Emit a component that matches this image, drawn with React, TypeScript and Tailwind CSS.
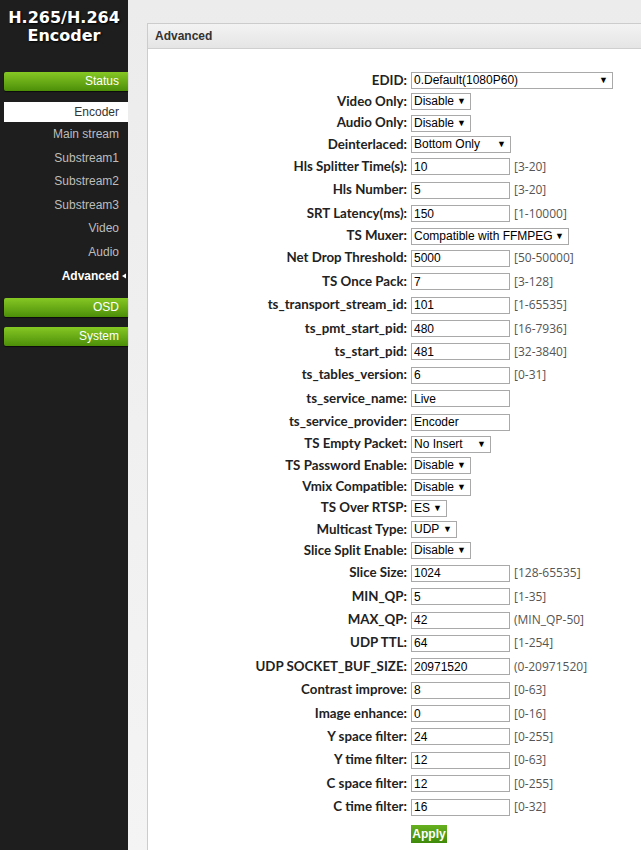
import React from 'react';

type Row =
  | { kind: 'select'; label: string; value: string; width: number }
  | { kind: 'input'; label: string; value: string; range?: string };

const rows: Row[] = [
  { kind: 'select', label: 'EDID', value: '0.Default(1080P60)', width: 202 },
  { kind: 'select', label: 'Video Only', value: 'Disable', width: 60 },
  { kind: 'select', label: 'Audio Only', value: 'Disable', width: 60 },
  { kind: 'select', label: 'Deinterlaced', value: 'Bottom Only', width: 100 },
  { kind: 'input', label: 'Hls Splitter Time(s)', value: '10', range: '[3-20]' },
  { kind: 'input', label: 'Hls Number', value: '5', range: '[3-20]' },
  { kind: 'input', label: 'SRT Latency(ms)', value: '150', range: '[1-10000]' },
  { kind: 'select', label: 'TS Muxer', value: 'Compatible with FFMPEG', width: 158 },
  { kind: 'input', label: 'Net Drop Threshold', value: '5000', range: '[50-50000]' },
  { kind: 'input', label: 'TS Once Pack', value: '7', range: '[3-128]' },
  { kind: 'input', label: 'ts_transport_stream_id', value: '101', range: '[1-65535]' },
  { kind: 'input', label: 'ts_pmt_start_pid', value: '480', range: '[16-7936]' },
  { kind: 'input', label: 'ts_start_pid', value: '481', range: '[32-3840]' },
  { kind: 'input', label: 'ts_tables_version', value: '6', range: '[0-31]' },
  { kind: 'input', label: 'ts_service_name', value: 'Live' },
  { kind: 'input', label: 'ts_service_provider', value: 'Encoder' },
  { kind: 'select', label: 'TS Empty Packet', value: 'No Insert', width: 80 },
  { kind: 'select', label: 'TS Password Enable', value: 'Disable', width: 60 },
  { kind: 'select', label: 'Vmix Compatible', value: 'Disable', width: 60 },
  { kind: 'select', label: 'TS Over RTSP', value: 'ES', width: 36 },
  { kind: 'select', label: 'Multicast Type', value: 'UDP', width: 46 },
  { kind: 'select', label: 'Slice Split Enable', value: 'Disable', width: 60 },
  { kind: 'input', label: 'Slice Size', value: '1024', range: '[128-65535]' },
  { kind: 'input', label: 'MIN_QP', value: '5', range: '[1-35]' },
  { kind: 'input', label: 'MAX_QP', value: '42', range: '(MIN_QP-50]' },
  { kind: 'input', label: 'UDP TTL', value: '64', range: '[1-254]' },
  { kind: 'input', label: 'UDP SOCKET_BUF_SIZE', value: '20971520', range: '(0-20971520]' },
  { kind: 'input', label: 'Contrast improve', value: '8', range: '[0-63]' },
  { kind: 'input', label: 'Image enhance', value: '0', range: '[0-16]' },
  { kind: 'input', label: 'Y space filter', value: '24', range: '[0-255]' },
  { kind: 'input', label: 'Y time filter', value: '12', range: '[0-63]' },
  { kind: 'input', label: 'C space filter', value: '12', range: '[0-255]' },
  { kind: 'input', label: 'C time filter', value: '16', range: '[0-32]' },
];

const subItems = ['Main stream', 'Substream1', 'Substream2', 'Substream3', 'Video', 'Audio'];

const GreenTab: React.FC<{ label: string }> = ({ label }) => (
  <div className="ml-[4px] h-[19px] rounded-l-[2px] bg-gradient-to-b from-[#86c823] to-[#4c8f08] text-right pr-[9px] text-[12px] leading-[19px] text-white shadow-[0_1px_1px_rgba(0,0,0,0.6)]">
    {label}
  </div>
);

const FakeSelect: React.FC<{ value: string; width: number }> = ({ value, width }) => (
  <div
    className="relative h-[17px] border border-[#a9a9a9] bg-white pl-[2px] text-[12px] leading-[15px] text-black"
    style={{ width }}
  >
    <span>{value}</span>
    <span className="absolute right-[4px] top-0 text-[9px] leading-[15px]">▼</span>
  </div>
);

export default function App() {
  return (
    <div className="flex min-h-[850px] w-[641px] overflow-hidden bg-gradient-to-b from-[#ececec] to-[#f4f4f4] font-['Liberation_Sans',Arial,sans-serif]">
      <aside className="w-[128px] shrink-0 bg-[#1e1e1e]">
        <div className="pt-[9px] text-center font-['DejaVu_Sans',Verdana,sans-serif] text-[16px] font-bold leading-[18px] text-white [text-shadow:1px_1px_2px_#000]">
          <div>H.265/H.264</div>
          <div>Encoder</div>
        </div>
        <div className="mt-[27px]">
          <GreenTab label="Status" />
        </div>
        <div className="ml-[4px] mt-[11px] h-[20px] bg-white pr-[9px] text-right text-[12px] leading-[20px] text-[#333]">
          Encoder
        </div>
        <div className="mt-[1px] flex flex-col">
          {subItems.map(s => (
            <div key={s} className="h-[23.6px] pr-[9px] text-right text-[12px] leading-[23.6px] text-[#bdbdbd]">
              {s}
            </div>
          ))}
          <div className="flex h-[23.6px] items-center justify-end text-[12px] font-bold text-white">
            <span>Advanced</span>
            <svg width="9" height="6" viewBox="0 0 9 6">
              <path d="M3 3 L7 0.5 L7 5.5 Z" fill="#fff" />
            </svg>
          </div>
        </div>
        <div className="mt-[10px]">
          <GreenTab label="OSD" />
        </div>
        <div className="mt-[10px]">
          <GreenTab label="System" />
        </div>
      </aside>

      <main className="flex-1 pl-[19px] pt-[23px]">
        <div className="min-h-[827px] border-l border-t border-[#cccccc] bg-white">
          <div className="h-[25px] border-b border-[#cfcfcf] bg-gradient-to-b from-[#f3f3f3] to-[#e5e5e5] pl-[7px] text-[12px] font-bold leading-[25px] text-[#333]">
            Advanced
          </div>
          <div className="flex flex-col pt-[21px]">
            {rows.map(r => (
              <div
                key={r.label}
                className={`flex items-center ${r.kind === 'select' ? 'h-[21.3px]' : 'h-[23.4px]'}`}
              >
                <div className="w-[263px] shrink-0 pr-[4px] text-right font-['Lato',sans-serif] text-[13.3px] font-bold text-[#222]">
                  {r.label}:
                </div>
                {r.kind === 'select' ? (
                  <FakeSelect value={r.value} width={r.width} />
                ) : (
                  <>
                    <input
                      readOnly
                      value={r.value}
                      className="h-[17px] w-[99px] border border-[#a9a9a9] bg-white pl-[2px] text-[12px] text-black outline-none"
                    />
                    {r.range && (
                      <span className="ml-[4px] font-['Open_Sans',sans-serif] text-[12px] text-[#555]">{r.range}</span>
                    )}
                  </>
                )}
              </div>
            ))}
            <div className="mt-[2px] pl-[263px]">
              <button className="h-[18px] w-[36px] bg-gradient-to-b from-[#66b020] to-[#3f8a0a] text-[12px] font-bold leading-[18px] text-white">
                Apply
              </button>
            </div>
          </div>
        </div>
      </main>
    </div>
  );
}
